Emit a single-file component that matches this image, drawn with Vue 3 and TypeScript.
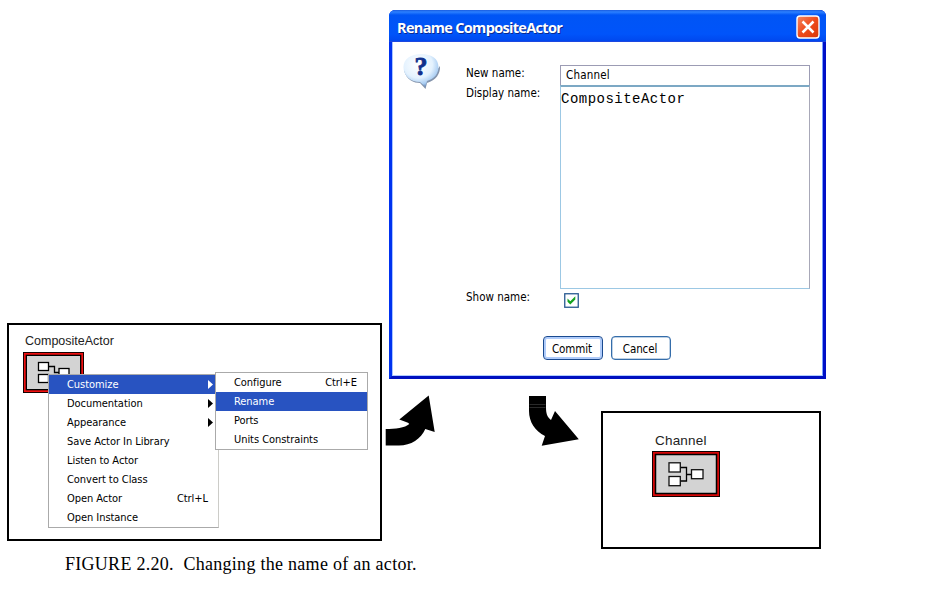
<script setup lang="ts">
interface MenuItem {
  label: string
  shortcut?: string
  submenu?: boolean
  active?: boolean
}

const contextMenu: MenuItem[] = [
  { label: 'Customize', submenu: true, active: true },
  { label: 'Documentation', submenu: true },
  { label: 'Appearance', submenu: true },
  { label: 'Save Actor In Library' },
  { label: 'Listen to Actor' },
  { label: 'Convert to Class' },
  { label: 'Open Actor', shortcut: 'Ctrl+L' },
  { label: 'Open Instance' },
]

const customizeMenu: MenuItem[] = [
  { label: 'Configure', shortcut: 'Ctrl+E' },
  { label: 'Rename', active: true },
  { label: 'Ports' },
  { label: 'Units Constraints' },
]
</script>

<template>
  <main class="figure">
    <section class="dialog">
      <header class="titlebar">
        <span class="title">Rename CompositeActor</span>
        <button class="close" aria-label="Close">
          <svg width="24" height="24" viewBox="0 0 24 24">
            <defs>
              <linearGradient id="closeFill" x1="0" y1="0" x2="1" y2="1">
                <stop offset="0" stop-color="#f58a62" />
                <stop offset="0.5" stop-color="#ee4a1c" />
                <stop offset="1" stop-color="#d83808" />
              </linearGradient>
            </defs>
            <rect x="1" y="1" width="22" height="22" rx="3" fill="url(#closeFill)" stroke="#fff" stroke-width="1.4" />
            <path d="M6.5 6.5 L17.5 17.5 M17.5 6.5 L6.5 17.5" stroke="#fff" stroke-width="2.5" />
          </svg>
        </button>
      </header>
      <div class="body">
        <svg class="question" width="38" height="36" viewBox="0 0 38 36">
          <defs>
            <radialGradient id="bubble" cx="0.42" cy="0.32" r="0.68">
              <stop offset="0" stop-color="#fff" />
              <stop offset="0.6" stop-color="#e4f2fe" />
              <stop offset="0.88" stop-color="#a8ccf2" />
              <stop offset="1" stop-color="#6f92c0" />
            </radialGradient>
          </defs>
          <path d="M1 17 C3 27 11 30 17 30 L22.5 36 L24 30 C33 27 37.5 21 37 13 C30 24 12 26 1 17 Z" fill="#8494ac" />
          <path d="M0.5 14 C0.5 6 8 1 18 1 C29 1 35.5 6 35.5 14 C35.5 21 31 26 24 28 L22.5 34 L17 29 C8 29 0.5 23 0.5 14 Z" fill="url(#bubble)" />
          <text x="18" y="22" text-anchor="middle" class="mark">?</text>
        </svg>
        <div class="form">
          <label class="label">New name:</label>
          <div class="input"><span>Channel</span></div>
          <label class="label">Display name:</label>
          <div class="textarea"><span>CompositeActor</span></div>
          <label class="label">Show name:</label>
          <svg class="check" width="15" height="15" viewBox="0 0 15 15">
            <rect x="0.75" y="0.75" width="13.5" height="13.5" fill="#fff" stroke="#285a91" stroke-width="1.3" />
            <path d="M3.5 5.5 L6.3 8.3 L11.3 3.3 V6.6 L6.3 11.6 L3.5 8.8 Z" fill="#16a321" />
          </svg>
        </div>
      </div>
      <footer class="buttons">
        <button class="btn primary"><span>Commit</span></button>
        <button class="btn"><span>Cancel</span></button>
      </footer>
    </section>

    <section class="panel before">
      <div class="node">
        <span class="node-name">CompositeActor</span>
        <svg width="61" height="41" viewBox="0 0 61 41">
          <rect width="61" height="41" fill="#000" />
          <rect x="1.8" y="1.8" width="57.4" height="37.4" fill="none" stroke="#f01010" stroke-width="1.8" />
          <rect x="3.5" y="3.5" width="54" height="34" fill="#d3d3d3" stroke="#000" />
          <path d="M26 14.5 H31.5 V20.5 H36" fill="none" stroke="#000" stroke-width="1.3" />
          <g fill="#fff" stroke="#000" stroke-width="1.3">
            <rect x="15.5" y="10.5" width="10" height="8" />
            <rect x="15.5" y="22.5" width="10" height="8" />
            <rect x="36" y="16.5" width="10" height="8" />
          </g>
        </svg>
      </div>
      <nav class="menu context">
        <div v-for="item in contextMenu" :key="item.label" class="item" :class="{ active: item.active }">
          <span class="text">{{ item.label }}</span>
          <span v-if="item.shortcut" class="shortcut">{{ item.shortcut }}</span>
          <svg v-if="item.submenu" class="caret" width="5" height="9" viewBox="0 0 5 9">
            <path d="M0 0 L5 4.5 L0 9 Z" fill="currentColor" />
          </svg>
        </div>
      </nav>
      <nav class="menu sub">
        <div v-for="item in customizeMenu" :key="item.label" class="item" :class="{ active: item.active }">
          <span class="text">{{ item.label }}</span>
          <span v-if="item.shortcut" class="shortcut">{{ item.shortcut }}</span>
        </div>
      </nav>
    </section>

    <svg class="arrow up" width="52" height="52" viewBox="0 0 52 52">
      <path d="M0.7 34 C10 34 20 33 24.3 29 L23 27.7 L14.3 24.5 L43.7 0.5 L49.7 37 L40.3 34 C36 44 26 50.5 14 50.5 H0.7 Z" />
    </svg>
    <svg class="arrow down" width="52" height="52" viewBox="0 0 52 52">
      <path d="M0 0 H17 V11 C17 17 18 21 22 24 L26 15 L49.8 43.3 L12.7 49.8 L16 40 C6 35 0 26 0 15 Z" />
      <path d="M0.5 8.5 H16.5 M0.5 11.5 H16.5" stroke="#444" stroke-width="0.6" />
    </svg>

    <section class="panel after">
      <div class="node">
        <span class="node-name channel">Channel</span>
        <svg width="68" height="46" viewBox="0 0 68 46">
          <rect width="68" height="46" fill="#100000" />
          <rect x="1.9" y="1.9" width="64.2" height="42.2" fill="none" stroke="#e00808" stroke-width="1.7" />
          <rect x="3.6" y="3.6" width="60.8" height="38.8" fill="#d3d3d3" stroke="#000" stroke-width="1.3" />
          <path d="M28 16.5 H34.5 V30 H28 M34.5 23.5 H39" fill="none" stroke="#000" stroke-width="1.3" />
          <g fill="#fff" stroke="#111" stroke-width="1.3">
            <rect x="17" y="11.8" width="11.3" height="9.2" />
            <rect x="17" y="25.5" width="11.3" height="9.2" />
            <rect x="39.5" y="18.7" width="11.5" height="9" />
          </g>
        </svg>
      </div>
    </section>

    <p class="caption">FIGURE 2.20.&nbsp; Changing the name of an actor.</p>
  </main>
</template>

<style>
body {
  background: #fff;
}
</style>

<style scoped>
.figure {
  position: relative;
  width: 938px;
  height: 605px;
  overflow: hidden;
  background: #fff;
  color: #000;
  font: 11px/19px "DejaVu Sans Condensed", "DejaVu Sans", sans-serif;
}
.figure * {
  box-sizing: border-box;
}
svg {
  display: block;
}
button {
  padding: 0;
  font: inherit;
  color: inherit;
}

.dialog {
  position: absolute;
  left: 389px;
  top: 10px;
  width: 437px;
  height: 369px;
  border: 3px solid #0032f0;
  border-top: 0;
  border-right-color: #0010c8;
  border-bottom-color: #0010c0;
  border-radius: 6px 6px 0 0;
  background: #0032e6;
}
.titlebar {
  display: flex;
  align-items: center;
  justify-content: space-between;
  height: 32px;
  margin: 0 -3px;
  padding: 3px 6px 0 8px;
  border-radius: 6px 6px 0 0;
  border-bottom: 1px solid #1c48e0;
  background: linear-gradient(#1a5ce0 0, #2c80ff 2px, #0055f5 5px, #0054fa 24px, #0048ee 31px);
}
.title {
  padding-top: 2px;
  color: #fff;
  font: bold 14.5px/20px "Open Sans", sans-serif;
  letter-spacing: -0.68px;
  text-shadow: 1px 1px 0 #0a2a90;
  white-space: nowrap;
}
.close {
  border: 0;
  background: none;
}
.body {
  display: flex;
  height: 284px;
  padding: 11px 0 0 10px;
  background: #fff;
  border-left: 1px solid #a8c4ff;
  border-right: 1px solid #78a0ff;
}
.mark {
  font: bold 26px "Liberation Serif", serif;
  fill: #10308c;
  stroke: #10308c;
  stroke-width: 0.8;
}
.form {
  display: grid;
  grid-template-columns: 94px 250px;
  grid-template-rows: 20px 204px 1fr;
  margin: 12px 0 0 25px;
  align-content: start;
}
.label {
  font-size: 11.5px;
  line-height: 17px;
  white-space: nowrap;
}
.textarea + .label {
  line-height: 16px;
}
.input {
  border: 1px solid #9c9cb4;
  border-bottom-width: 0;
  padding-left: 5px;
  font-size: 11.5px;
  line-height: 19px;
  letter-spacing: 0.2px;
}
.textarea {
  border: 1px solid #9cc8e4;
  border-top: 2px solid #7ca8c4;
  border-right-color: #a8a8b8;
  padding: 2px 0 0 0;
  font: 14px/20px "Liberation Mono", monospace;
  letter-spacing: 0.48px;
}
.check {
  margin: 4px 0 0 4px;
}
.buttons {
  display: flex;
  gap: 8px;
  height: 50px;
  padding: 10px 0 0 150px;
  background: #fff;
  border-left: 1px solid #a8c4ff;
  border-right: 1px solid #78a0ff;
  border-bottom: 1px solid #b0ccff;
}
.btn {
  width: 60px;
  height: 24px;
  padding: 1px 2px 0 0;
  font-size: 11.5px;
  line-height: 18px;
  letter-spacing: -0.1px;
  border: 1.5px solid #356daa;
  border-radius: 4px;
  background: #fff;
  box-shadow: inset 0 0 0 0.5px #7fa4cc;
}
.primary {
  border-color: #1a4a90;
  box-shadow: inset 0 0 0 2px #b0ccfa;
}

.panel {
  position: absolute;
  border: 2px solid #000;
  background: #fff;
}
.before {
  left: 7px;
  top: 323px;
  width: 375px;
  height: 218px;
  padding: 8px 0 0 14px;
}
.after {
  left: 601px;
  top: 411px;
  width: 220px;
  height: 138px;
  padding: 19px 0 0 49px;
}
.node-name {
  display: block;
  height: 19px;
  padding-left: 2px;
  font: 12.5px/17px "Liberation Sans", sans-serif;
  color: #222;
}
.channel {
  padding-left: 3px;
  font-size: 13.5px;
  letter-spacing: 0.2px;
}
.menu {
  position: absolute;
  border: 1px solid #aaa;
  background: #fff;
}
.context {
  left: 39px;
  top: 49px;
  width: 171px;
  border-right-color: #ccccc8;
}
.sub {
  left: 206px;
  top: 47px;
  width: 153px;
}
.item {
  display: flex;
  align-items: center;
  height: 19px;
  padding: 0 10px 0 18px;
  letter-spacing: -0.05px;
  white-space: nowrap;
}
.item.active {
  background: #2853c1;
  color: #fff;
}
.text {
  flex: 1;
}
.caret {
  margin-right: -5px;
}

.arrow {
  position: absolute;
  fill: #000;
}
.up {
  left: 385px;
  top: 395px;
}
.down {
  left: 529px;
  top: 396px;
}
.caption {
  position: absolute;
  left: 65px;
  top: 554px;
  margin: 0;
  font: 18px/20px "Liberation Serif", serif;
  letter-spacing: 0.28px;
  white-space: nowrap;
}
</style>
